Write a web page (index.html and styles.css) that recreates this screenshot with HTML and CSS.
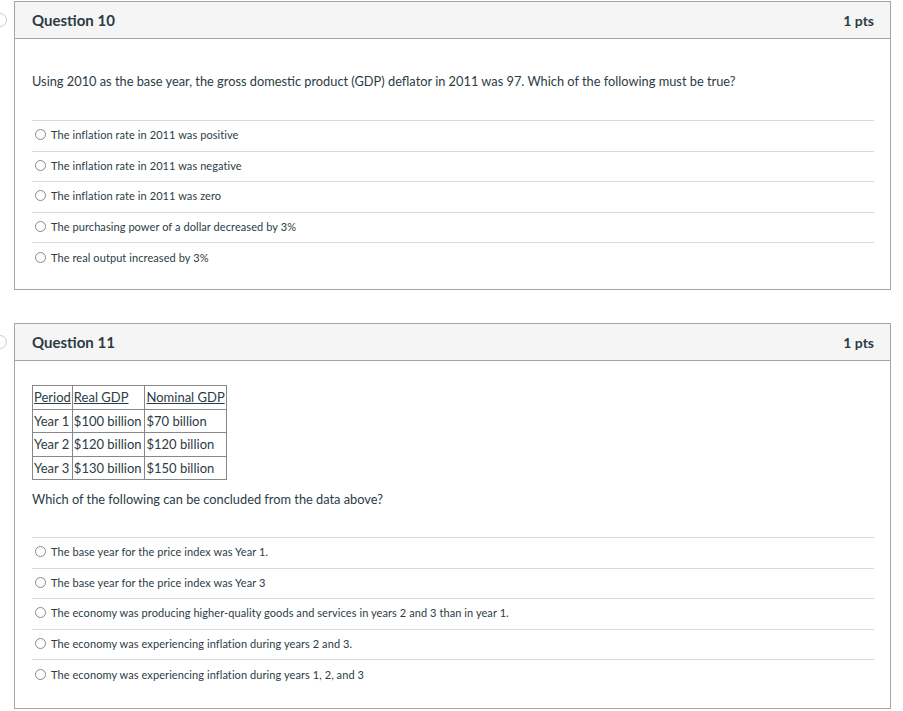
FILE: index.html
```html
<!DOCTYPE html>
<html>
<head>
<meta charset="utf-8">
<link rel="stylesheet" href="styles.css">
</head>
<body>
<div class="page">
  <div class="qrow">
    <div class="marker"><span class="dot"></span></div>
    <div class="card">
      <div class="head"><span class="title">Question 10</span><span class="pts">1 pts</span></div>
      <div class="body q10">
        <p class="qtext">Using 2010 as the base year, the gross domestic product (GDP) deflator in 2011 was 97. Which of the following must be true?</p>
        <div class="answers">
          <div class="ans"><span class="radio"></span><span>The inflation rate in 2011 was positive</span></div>
          <div class="ans"><span class="radio"></span><span>The inflation rate in 2011 was negative</span></div>
          <div class="ans"><span class="radio"></span><span>The inflation rate in 2011 was zero</span></div>
          <div class="ans"><span class="radio"></span><span>The purchasing power of a dollar decreased by 3%</span></div>
          <div class="ans"><span class="radio"></span><span>The real output increased by 3%</span></div>
        </div>
      </div>
    </div>
  </div>

  <div class="qrow second">
    <div class="marker"><span class="dot"></span></div>
    <div class="card">
      <div class="head"><span class="title">Question 11</span><span class="pts">1 pts</span></div>
      <div class="body q11">
        <table class="data">
          <tr><th>Period</th><th>Real GDP</th><th>Nominal GDP</th></tr>
          <tr><td>Year 1</td><td>$100 billion</td><td>$70 billion</td></tr>
          <tr><td>Year 2</td><td>$120 billion</td><td>$120 billion</td></tr>
          <tr><td>Year 3</td><td>$130 billion</td><td>$150 billion</td></tr>
        </table>
        <p class="qtext2">Which of the following can be concluded from the data above?</p>
        <div class="answers">
          <div class="ans"><span class="radio"></span><span>The base year for the price index was Year 1.</span></div>
          <div class="ans"><span class="radio"></span><span>The base year for the price index was Year 3</span></div>
          <div class="ans"><span class="radio"></span><span>The economy was producing higher-quality goods and services in years 2 and 3 than in year 1.</span></div>
          <div class="ans"><span class="radio"></span><span>The economy was experiencing inflation during years 2 and 3.</span></div>
          <div class="ans"><span class="radio"></span><span>The economy was experiencing inflation during years 1, 2, and 3</span></div>
        </div>
      </div>
    </div>
  </div>
</div>
</body>
</html>
```

FILE: styles.css
```css
* { box-sizing: border-box; }
html, body { margin: 0; padding: 0; background: #fff; }
body {
  font-family: Lato, "Open Sans", "Liberation Sans", sans-serif;
  color: #2d3b45;
}
.page {
  padding: 1px 12px 0 0;
}
.qrow {
  display: flex;
  align-items: flex-start;
}
.qrow.second { margin-top: 33px; }
.marker {
  width: 14px;
  flex: none;
  overflow: hidden;
  padding-top: 12px;
}
.dot {
  display: block;
  width: 14px;
  height: 14px;
  margin-left: -7px;
  border: 1px solid #c7cdd1;
  border-radius: 50%;
  background: #fff;
}
.card {
  flex: 1;
  border: 1px solid #a5a5a5;
  background: #fff;
}
.head {
  height: 37px;
  background: #f5f5f5;
  border-bottom: 1px solid #a5a5a5;
  display: flex;
  align-items: center;
  justify-content: space-between;
  padding: 0 16px 0 17px;
}
.title {
  font-size: 15px;
  font-weight: 700;
  color: #2d3b45;
}
.pts {
  font-size: 14px;
  font-weight: 700;
  color: #2d3b45;
}
.body {
  padding: 0 16px 0 17px;
}
.q10 { padding-top: 33px; height: 250px; }
.q11 { padding-top: 24px; height: 347px; }
.qtext {
  margin: 0;
  font-size: 12.8px;
  line-height: 18px;
  color: #2d3b45;
}
.answers {
  margin-top: 30px;
}
.q11 .answers { margin-top: 29px; }
.ans {
  height: 30.6px;
  border-top: 1px solid #d9d9d9;
  display: flex;
  align-items: center;
  font-size: 11px;
  letter-spacing: 0.08px;
  color: #2d3b45;
  padding-left: 3px;
  padding-bottom: 2px;
}
.radio {
  width: 11px;
  height: 11px;
  border: 1px solid #8a8a8a;
  border-radius: 50%;
  margin-right: 5px;
  flex: none;
}
table.data {
  border-collapse: collapse;
  border: 1px solid #333;
  font-size: 13px;
  color: #2d3b45;
}
table.data th, table.data td {
  border: 1px solid #888;
  padding: 0 1px;
  height: 23.5px;
  text-align: left;
  font-weight: 400;
  white-space: nowrap;
}
table.data th { text-decoration: underline; }
table.data th:nth-child(2) { padding-right: 16px; }
.qtext2 {
  margin: 10px 0 0;
  font-size: 12.8px;
  line-height: 18px;
}
```
